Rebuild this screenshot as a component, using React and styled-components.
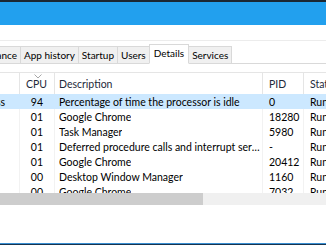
import React from 'react';
import styled, { createGlobalStyle } from 'styled-components';

const GlobalStyle = createGlobalStyle`
  html, body {
    margin: 0;
    padding: 0;
    background: #ffffff;
  }
  body {
    font-family: Lato, "Noto Sans", sans-serif;
    font-size: 10.5px;
    color: #000;
  }
`;

const hiddenTabs = ['Processes', 'Performance'];
const tabs = ['App history', 'Startup', 'Users', 'Details', 'Services'];

const rows = [
  { name: 'System Idle Process', cpu: '94', desc: 'Percentage of time the processor is idle', pid: '0', status: 'Running', selected: true },
  { name: 'chrome.exe', cpu: '01', desc: 'Google Chrome', pid: '18280', status: 'Running' },
  { name: 'Taskmgr.exe', cpu: '01', desc: 'Task Manager', pid: '5980', status: 'Running' },
  { name: 'Interrupts', cpu: '01', desc: 'Deferred procedure calls and interrupt service routines', pid: '-', status: 'Running' },
  { name: 'chrome.exe', cpu: '01', desc: 'Google Chrome', pid: '20412', status: 'Running' },
  { name: 'dwm.exe', cpu: '00', desc: 'Desktop Window Manager', pid: '1160', status: 'Running' },
  { name: 'chrome.exe', cpu: '00', desc: 'Google Chrome', pid: '7032', status: 'Running' },
];

const Window = styled.div`
  width: 326px;
  height: 245px;
  overflow: hidden;
  display: flex;
  flex-direction: column;
  background: #fff;
`;

const TitleBar = styled.div`
  height: 23px;
  border-top: 2px solid #1b2733;
  background: #22a0ee;
  flex-shrink: 0;
`;

const MenuBar = styled.div`
  height: 15px;
  flex-shrink: 0;
`;

const TabBar = styled.div`
  height: 22px;
  flex-shrink: 0;
  display: flex;
  align-items: flex-end;
  border-top: 1px solid #ececec;
  border-bottom: 1px solid #d9d9d9;
`;

// tabs scrolled off to the left: only the right end of "Performance" shows
const TabOverflow = styled.div`
  width: 20px;
  flex-shrink: 0;
  display: flex;
  align-items: flex-end;
  justify-content: flex-end;
  overflow: hidden;
`;

const Tab = styled.div`
  box-sizing: border-box;
  flex-shrink: 0;
  height: ${(p) => (p.$active ? '20px' : '17px')};
  margin-bottom: ${(p) => (p.$active ? '-1px' : '0')};
  padding: ${(p) => (p.$active ? '0 4px 2px' : '0 3px')};
  display: flex;
  align-items: center;
  white-space: nowrap;
  font-size: 10px;
  background: ${(p) => (p.$active ? '#ffffff' : '#f0f0f0')};
  border: 1px solid #d9d9d9;
  border-bottom: ${(p) => (p.$active ? '1px solid #ffffff' : 'none')};
  margin-right: -1px;
  position: relative;
  z-index: ${(p) => (p.$active ? 1 : 0)};
  color: #000;
`;

const Gap = styled.div`
  height: 8px;
  flex-shrink: 0;
`;

const List = styled.div`
  border-top: 1px solid #e5e5e5;
  flex-shrink: 0;
`;

const grid = `
  display: grid;
  grid-template-columns: 20px 35px 208px 41px 80px;
`;

const HeaderRow = styled.div`
  ${grid}
  height: 21px;
`;

const HeaderCell = styled.div`
  position: relative;
  display: flex;
  align-items: center;
  justify-content: ${(p) => (p.$right ? 'flex-end' : 'flex-start')};
  padding: ${(p) => p.$pad || '0 0 0 4px'};
  border-right: 1px solid #e5e5e5;
  color: #1e2a3a;
  white-space: nowrap;
  overflow: hidden;
`;

const SortCaret = styled.svg`
  position: absolute;
  top: 1px;
  left: 14px;
`;

const Body = styled.div`
  height: 99px;
  overflow: hidden;
`;

const Row = styled.div`
  ${grid}
  height: 15px;
  background: ${(p) => (p.$selected ? '#cce8ff' : 'transparent')};
`;

const Cell = styled.div`
  display: flex;
  align-items: center;
  justify-content: ${(p) => (p.$right ? 'flex-end' : 'flex-start')};
  padding: ${(p) => p.$pad || '0 0 0 4px'};
  border-right: 1px solid ${(p) => (p.$selected ? '#cce8ff' : '#f2f2f2')};
  white-space: nowrap;
  overflow: hidden;
  min-width: 0;
`;

const Ellipsis = styled.span`
  overflow: hidden;
  text-overflow: ellipsis;
  white-space: nowrap;
`;

const ScrollTrack = styled.div`
  height: 12px;
  flex-shrink: 0;
  background: #f0f0f0;
  display: flex;
`;

const ScrollThumb = styled.div`
  width: ${(p) => p.$w}px;
  background: #cdcdcd;
`;

const StatusArea = styled.div`
  flex: 1;
`;

const BottomEdge = styled.div`
  height: 1px;
  flex-shrink: 0;
  border-top: 1px solid #3a8fd2;
  background: #173450;
`;

export default function App() {
  return (
    <>
      <GlobalStyle />
      <Window>
        <TitleBar />
        <MenuBar />
        <TabBar>
          <TabOverflow>
            {hiddenTabs.map((t) => (
              <Tab key={t}>{t}</Tab>
            ))}
          </TabOverflow>
          {tabs.map((t) => (
            <Tab key={t} $active={t === 'Details'}>{t}</Tab>
          ))}
        </TabBar>
        <Gap />
        <List>
          <HeaderRow>
            <HeaderCell />
            <HeaderCell $right $pad="0 7px 0 0">
              CPU
              <SortCaret width="8" height="5" viewBox="0 0 8 5">
                <path d="M0.5 0.5 L4 4 L7.5 0.5" fill="none" stroke="#a8a8a8" strokeWidth="1" />
              </SortCaret>
            </HeaderCell>
            <HeaderCell>Description</HeaderCell>
            <HeaderCell $pad="0 0 0 6px">PID</HeaderCell>
            <HeaderCell $pad="0 0 0 6px">Status</HeaderCell>
          </HeaderRow>
          <Body>
            {rows.map((r, i) => (
              <Row key={i} $selected={r.selected}>
                <Cell $right $pad="0 14px 0 0" $selected={r.selected}>{r.selected ? r.name : ''}</Cell>
                <Cell $right $pad="0 11px 0 0" $selected={r.selected}>{r.cpu}</Cell>
                <Cell $pad="0 2px 0 4px" $selected={r.selected}><Ellipsis>{r.desc}</Ellipsis></Cell>
                <Cell $pad="0 0 0 6px" $selected={r.selected}>{r.pid}</Cell>
                <Cell $pad="0 0 0 6px" $selected={r.selected}>{r.status}</Cell>
              </Row>
            ))}
          </Body>
        </List>
        <ScrollTrack>
          <ScrollThumb $w={203} />
        </ScrollTrack>
        <StatusArea />
        <BottomEdge />
      </Window>
    </>
  );
}
